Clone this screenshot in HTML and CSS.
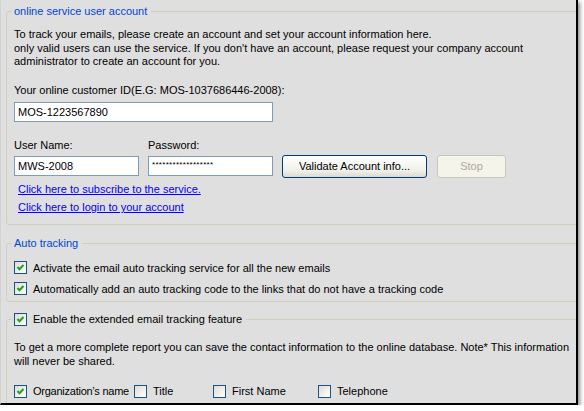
FILE: index.html
```html
<!DOCTYPE html>
<html>
<head>
<meta charset="utf-8">
<link rel="stylesheet" href="styles.css">
</head>
<body>
<div class="frame">
  <fieldset class="group g1">
    <legend>online service user account</legend>
    <p class="intro">To track your emails, please create an account and set your account information here.<br>only valid users can use the service. If you don't have an account, please request your company account<br>administrator to create an account for you.</p>
    <div class="lbl id-lbl">Your online customer ID(E.G: MOS-1037686446-2008):</div>
    <input class="field wide" type="text" value="MOS-1223567890">
    <div class="cred">
      <span class="lbl">User Name:</span>
      <span class="lbl">Password:</span>
      <span></span>
      <span></span>
      <input class="field" type="text" value="MWS-2008">
      <input class="field pw" type="text" value="******************">
      <button class="btn">Validate Account info...</button>
      <button class="btn disabled">Stop</button>
    </div>
    <a class="link" href="#">Click here to subscribe to the service.</a>
    <a class="link" href="#">Click here to login to your account</a>
  </fieldset>

  <fieldset class="group g2">
    <legend>Auto tracking</legend>
    <div class="checks">
      <label class="chk"><span class="cb on"><svg viewBox="0 0 11 11" width="11" height="11"><polyline points="2.5,5 4.5,7.2 8.5,3" fill="none" stroke="#21a121" stroke-width="2"/></svg></span>Activate the email auto tracking service for all the new emails</label>
      <label class="chk"><span class="cb on"><svg viewBox="0 0 11 11" width="11" height="11"><polyline points="2.5,5 4.5,7.2 8.5,3" fill="none" stroke="#21a121" stroke-width="2"/></svg></span>Automatically add an auto tracking code to the links that do not have a tracking code</label>
    </div>
  </fieldset>

  <fieldset class="group g3">
    <legend class="chk-legend"><label class="chk"><span class="cb on"><svg viewBox="0 0 11 11" width="11" height="11"><polyline points="2.5,5 4.5,7.2 8.5,3" fill="none" stroke="#21a121" stroke-width="2"/></svg></span>Enable the extended email tracking feature</label></legend>
    <p class="intro note">To get a more complete report you can save the contact information to the online database. Note* This information<br>will never be shared.</p>
    <div class="fields-row">
      <label class="chk"><span class="cb on"><svg viewBox="0 0 11 11" width="11" height="11"><polyline points="2.5,5 4.5,7.2 8.5,3" fill="none" stroke="#21a121" stroke-width="2"/></svg></span><span class="tight">Organization’s name</span></label>
      <label class="chk"><span class="cb"></span>Title</label>
      <label class="chk"><span class="cb"></span>First Name</label>
      <label class="chk"><span class="cb"></span>Telephone</label>
    </div>
  </fieldset>
</div>
</body>
</html>
```

FILE: styles.css
```css
html, body {
  margin: 0;
  padding: 0;
  background: #ffffff;
}

body {
  font-family: "Liberation Sans", Arial, sans-serif;
  font-size: 11px;
  color: #000;
}

.frame {
  box-sizing: border-box;
  width: 578px;
  height: 405px;
  padding-top: 5px;
  background: #dfdfdf;
  border-left: 1px solid #d2d2d2;
  border-right: 2px solid #000;
  border-bottom: 2px solid #000;
  overflow: hidden;
  box-shadow: 2px 2px 4px rgba(0, 0, 0, 0.45);
}

.group {
  margin: 0 -6px 0 5px;
  padding: 0 0 0 7px;
  border: 1px solid #d0d0bf;
  border-radius: 3px;
  min-width: 0;
}

.group legend {
  color: #0046d5;
  padding: 0 4px 0 2px;
  margin-left: -2px;
  line-height: 13px;
}

.g1 {
  padding-top: 10px;
  padding-bottom: 8px;
}

.g2 {
  margin-top: 11.5px;
  padding-top: 9.5px;
  padding-bottom: 4px;
}

.g3 {
  margin-top: 11px;
  padding-top: 15px;
  padding-bottom: 40px;
}

.intro {
  margin: 0;
  line-height: 13.5px;
}

.lbl {
  line-height: 13px;
}

.id-lbl {
  margin-top: 15px;
}

.field {
  display: block;
  box-sizing: border-box;
  height: 20px;
  margin: 0;
  padding: 0 0 0 3px;
  border: 1px solid #7f9db9;
  background: #fff;
  font-family: inherit;
  font-size: 11px;
  color: #000;
  outline: none;
}

.wide {
  width: 259px;
  margin-top: 5.5px;
}

.cred {
  display: grid;
  grid-template-columns: 125px 125px 145px 70px;
  grid-template-rows: 13px 23px;
  column-gap: 9px;
  row-gap: 3px;
  align-items: center;
  margin-top: 16.5px;
}

.cred .field {
  width: 125px;
}

.pw {
  font-size: 8px;
  padding-bottom: 4px;
  letter-spacing: 0.3px;
}

.btn {
  box-sizing: border-box;
  height: 23px;
  margin: 0;
  padding: 0;
  border: 1px solid #003c74;
  border-radius: 3px;
  background: linear-gradient(#ffffff, #f0f0ea 70%, #dcdad0);
  font-family: inherit;
  font-size: 11px;
  color: #000;
}

.btn.disabled {
  margin-left: 1px;
  border-color: #c9c7ba;
  background: #f5f4ea;
  color: #aca899;
}

.link {
  display: block;
  width: max-content;
  margin-left: 4px;
  line-height: 18px;
  color: #0000ff;
  text-decoration: underline;
}

.cred + .link {
  margin-top: 2.5px;
}

.checks {
  display: flex;
  flex-direction: column;
  gap: 4px;
}

.chk {
  display: flex;
  align-items: center;
  height: 17px;
  white-space: nowrap;
}

.cb {
  box-sizing: border-box;
  width: 13px;
  height: 13px;
  margin-right: 6px;
  border: 1px solid #1c5180;
  background: linear-gradient(135deg, #dcdcd7, #ffffff);
  display: flex;
  align-items: center;
  justify-content: center;
  flex: none;
}

.chk-legend {
  color: #000 !important;
}

.chk-legend .chk {
  height: 13px;
}

.fields-row {
  display: grid;
  grid-template-columns: 120px 79px 105px auto;
  margin-top: 14.5px;
}

.tight {
  letter-spacing: -0.25px;
}
```
